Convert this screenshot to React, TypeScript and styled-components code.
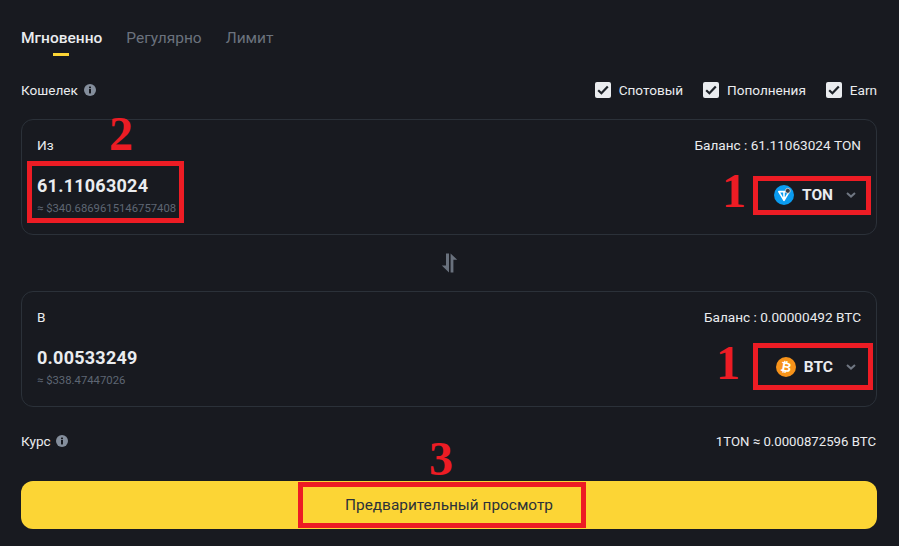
import { ReactNode } from "react";
import styled, { createGlobalStyle } from "styled-components";

const GlobalStyle = createGlobalStyle`
  html, body {
    margin: 0;
    padding: 0;
    background: #181a20;
  }
  * {
    box-sizing: border-box;
  }
`;

const InfoIcon = () => (
  <InfoSvg viewBox="0 0 12 12">
    <circle cx="6" cy="6" r="6" fill="#848e9c" />
    <rect x="5" y="5" width="2" height="4.4" fill="#181a20" />
    <rect x="5" y="2.6" width="2" height="1.6" fill="#181a20" />
  </InfoSvg>
);

const CheckBox = ({ label }: { label: string }) => (
  <CheckRow>
    <CheckSquare>
      <svg width="12" height="10" viewBox="0 0 12 10">
        <path d="M1.2 5.2 L4.4 8.2 L10.8 1.4" fill="none" stroke="#1e2329" strokeWidth="2.2" />
      </svg>
    </CheckSquare>
    {label}
  </CheckRow>
);

const TonLogo = () => (
  <svg width="20" height="20" viewBox="0 0 20 20">
    <circle cx="10" cy="10" r="10" fill="#0a9cf0" />
    <path d="M4.8 6.6 H15.2 L10 15.4 Z M10 6.6 V15.4" fill="none" stroke="#fff" strokeWidth="1.6" strokeLinejoin="round" />
    <circle cx="13.8" cy="5.8" r="2.5" fill="#3b4048" stroke="#d7dde2" strokeWidth="0.8" />
  </svg>
);

const BtcLogo = () => (
  <svg width="20" height="20" viewBox="0 0 20 20">
    <circle cx="10" cy="10" r="10" fill="#f7931a" />
    <text x="10" y="14.6" textAnchor="middle" fontFamily="Roboto, sans-serif" fontWeight="700" fontSize="13" fill="#fff" transform="rotate(10 10 10)">
      ₿
    </text>
  </svg>
);

const Chevron = () => (
  <ChevronSvg viewBox="0 0 10 6">
    <path d="M1 1 L5 4.6 L9 1" fill="none" stroke="#6f7682" strokeWidth="2" />
  </ChevronSvg>
);

const SwapIcon = () => (
  <svg width="17" height="20" viewBox="0 0 17 20">
    <path d="M5 0.5 H8 V19.5 L0.8 12.6 H5 Z" fill="#69717d" />
    <path d="M9.6 0.5 L16.2 6.8 H12.4 V19.5 H9.6 Z" fill="#69717d" />
  </svg>
);

interface CardProps {
  title: string;
  balance: string;
  amount: string;
  fiat: string;
  symbol: string;
  logo: ReactNode;
}

const AssetCard = ({ title, balance, amount, fiat, symbol, logo }: CardProps) => (
  <Card>
    <CardTop>
      <span>{title}</span>
      <span>Баланс : {balance}</span>
    </CardTop>
    <CardBottom>
      <div>
        <Amount>{amount}</Amount>
        <Fiat>{fiat}</Fiat>
      </div>
      <CoinPicker>
        {logo}
        <CoinName>{symbol}</CoinName>
        <Chevron />
      </CoinPicker>
    </CardBottom>
  </Card>
);

export default function App() {
  return (
    <Page>
      <GlobalStyle />
      <Tabs>
        <Tab $active>Мгновенно</Tab>
        <Tab>Регулярно</Tab>
        <Tab>Лимит</Tab>
      </Tabs>

      <WalletRow>
        <LabelWithInfo>
          Кошелек <InfoIcon />
        </LabelWithInfo>
        <Checks>
          <CheckBox label="Спотовый" />
          <CheckBox label="Пополнения" />
          <CheckBox label="Earn" />
        </Checks>
      </WalletRow>

      <AssetCard
        title="Из"
        balance="61.11063024 TON"
        amount="61.11063024"
        fiat="≈ $340.6869615146757408"
        symbol="TON"
        logo={<TonLogo />}
      />

      <SwapRow>
        <SwapIcon />
      </SwapRow>

      <AssetCard
        title="В"
        balance="0.00000492 BTC"
        amount="0.00533249"
        fiat="≈ $338.47447026"
        symbol="BTC"
        logo={<BtcLogo />}
      />

      <RateRow>
        <LabelWithInfo $gap={5}>
          Курс <InfoIcon />
        </LabelWithInfo>
        <span>1TON ≈ 0.0000872596 BTC</span>
      </RateRow>

      <PreviewButton>Предварительный просмотр</PreviewButton>

      <Mark $x={109} $y={108}>2</Mark>
      <Mark $x={722} $y={165}>1</Mark>
      <Mark $x={716} $y={337}>1</Mark>
      <Mark $x={429} $y={433}>3</Mark>

      <Frame $x={27} $y={161} $w={157} $h={62} />
      <Frame $x={753} $y={176} $w={118} $h={39} />
      <Frame $x={753} $y={343} $w={120} $h={47} />
      <Frame $x={298} $y={482} $w={288} $h={46} />
    </Page>
  );
}

const Page = styled.div`
  position: relative;
  width: 899px;
  height: 546px;
  padding: 0 22px 0 21px;
  background: #181a20;
  color: #eaecef;
  font-family: Roboto, "Liberation Sans", sans-serif;
  font-size: 13.6px;
  overflow: hidden;
`;

const Tabs = styled.div`
  display: flex;
  gap: 24px;
  height: 56px;
  padding-top: 28px;
`;

const Tab = styled.div<{ $active?: boolean }>`
  position: relative;
  font-size: 15.5px;
  line-height: 21px;
  font-weight: ${(p) => (p.$active ? 500 : 400)};
  color: ${(p) => (p.$active ? "#eaecef" : "#6b727d")};

  &::after {
    content: "";
    display: ${(p) => (p.$active ? "block" : "none")};
    position: absolute;
    left: 50%;
    bottom: 0;
    width: 16px;
    height: 3px;
    margin-left: -9px;
    background: #fcd535;
  }
`;

const WalletRow = styled.div`
  display: flex;
  justify-content: space-between;
  align-items: center;
  height: 63px;
  padding-top: 5px;
`;

const LabelWithInfo = styled.div<{ $gap?: number }>`
  display: flex;
  align-items: center;
  gap: ${(p) => p.$gap ?? 6}px;
`;

const InfoSvg = styled.svg`
  width: 12px;
  height: 12px;
`;

const Checks = styled.div`
  display: flex;
  gap: 20px;
`;

const CheckRow = styled.div`
  display: flex;
  align-items: center;
  gap: 8px;
  letter-spacing: -0.02px;
`;

const CheckSquare = styled.span`
  display: flex;
  align-items: center;
  justify-content: center;
  width: 16px;
  height: 16px;
  border-radius: 2px;
  background: #eaecef;
`;

const Card = styled.div`
  height: 116px;
  padding: 17px 15px 0;
  border: 1px solid #2b3139;
  border-radius: 12px;
`;

const CardTop = styled.div`
  display: flex;
  justify-content: space-between;
  line-height: 17px;
`;

const CardBottom = styled.div`
  display: flex;
  justify-content: space-between;
  align-items: center;
  margin-top: 20px;
`;

const Amount = styled.div`
  font-size: 18px;
  line-height: 24px;
  font-weight: 700;
  color: #eaecef;
  letter-spacing: 0.25px;
`;

const Fiat = styled.div`
  margin-top: 4px;
  font-size: 11.3px;
  line-height: 14px;
  color: #5e6673;
`;

const CoinPicker = styled.div`
  display: flex;
  align-items: center;
  gap: 8px;
  margin-top: -1px;
  padding-right: 5px;
`;

const CoinName = styled.span`
  font-size: 15.5px;
  font-weight: 700;
  color: #eaecef;
`;

const ChevronSvg = styled.svg`
  width: 10px;
  height: 6px;
  margin-left: 5px;
`;

const SwapRow = styled.div`
  display: flex;
  align-items: center;
  justify-content: center;
  height: 56px;
`;

const RateRow = styled.div`
  display: flex;
  justify-content: space-between;
  align-items: center;
  height: 68px;
  padding-right: 1px;

  > span {
    font-size: 13.2px;
  }
`;

const PreviewButton = styled.button`
  display: block;
  width: 100%;
  height: 48px;
  margin-top: 6px;
  border: none;
  border-radius: 12px;
  background: #fcd535;
  color: #2b3139;
  font-family: inherit;
  font-size: 15.4px;
`;

const Mark = styled.span<{ $x: number; $y: number }>`
  position: absolute;
  left: ${(p) => p.$x}px;
  top: ${(p) => p.$y}px;
  font-family: "Liberation Serif", serif;
  font-size: 48px;
  line-height: 52px;
  font-weight: 700;
  color: #ed1c24;
`;

const Frame = styled.div<{ $x: number; $y: number; $w: number; $h: number }>`
  position: absolute;
  left: ${(p) => p.$x}px;
  top: ${(p) => p.$y}px;
  width: ${(p) => p.$w}px;
  height: ${(p) => p.$h}px;
  border: 5px solid #ed1c24;
`;
